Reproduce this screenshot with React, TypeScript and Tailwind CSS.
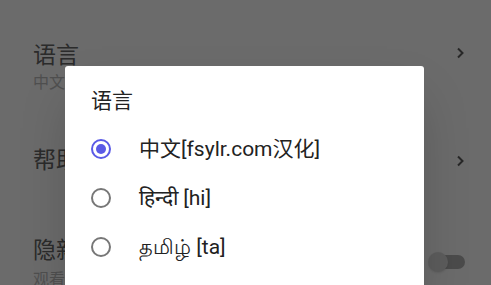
import { useState } from "react";

const cjk = "font-['Roboto','Noto_Sans_CJK_SC',sans-serif]";

const languages = [
  { code: "zh", label: "中文[fsylr.com汉化]" },
  { code: "hi", label: "हिन्दी [hi]" },
  { code: "ta", label: "தமிழ் [ta]" },
];

function Chevron() {
  return (
    <svg width="9" height="12" viewBox="0 0 9 12" className="shrink-0">
      <polyline points="2,1.5 6.5,6 2,10.5" fill="none" stroke="#5e5e5e" strokeWidth="2" />
    </svg>
  );
}

export default function App() {
  const [selected, setSelected] = useState("zh");

  return (
    <div className={`relative h-[285px] w-[491px] overflow-hidden bg-white ${cjk}`}>
      {/* Settings list underneath */}
      <div className="flex flex-col pl-[33px] pr-[26px]">
        <div className="flex items-start justify-between pt-[44px]">
          <div>
            <div className="text-[23px] leading-[24px] text-[#666]">语言</div>
            <div className="mt-[6px] text-[16px] leading-[18px] text-[#bdbdbd]">中文[fsylr.com汉化]</div>
          </div>
          <div className="pt-[3px]">
            <Chevron />
          </div>
        </div>
        <div className="flex items-center justify-between pt-[57px]">
          <div className="text-[23px] leading-[24px] text-[#666]">帮助</div>
          <Chevron />
        </div>
        <div className="flex items-start justify-between pt-[66px]">
          <div>
            <div className="text-[23px] leading-[24px] text-[#666]">隐新</div>
            <div className="mt-[8px] text-[16px] leading-[18px] text-[#bdbdbd]">观看</div>
          </div>
          <div className="relative mt-[13px] flex h-[20px] w-[37px] items-center justify-end">
            <div className="h-[14px] w-[30px] rounded-full bg-[#b4b4b4]" />
            <div className="absolute left-0 top-0 h-[20px] w-[20px] rounded-full bg-[#dcdcdc] shadow" />
          </div>
        </div>
      </div>

      {/* Scrim */}
      <div className="absolute inset-0 bg-black/[0.58]" />

      {/* Dialog */}
      <div className="absolute left-[65px] top-[66px] w-[359px] rounded-[3px] bg-white pb-6 pl-[26px] pt-[23px] shadow-2xl">
        <div className="text-[21px] leading-[24px] text-[#222]">语言</div>
        <div className="mt-[11px] flex flex-col">
          {languages.map((lang) => {
            const on = lang.code === selected;
            return (
              <button
                key={lang.code}
                onClick={() => setSelected(lang.code)}
                className="flex h-[49px] items-center text-left"
              >
                <span
                  className={`flex h-[20px] w-[20px] shrink-0 items-center justify-center rounded-full border-2 ${
                    on ? "border-[#5a5ae6]" : "border-[#777]"
                  }`}
                >
                  {on && <span className="h-[10px] w-[10px] rounded-full bg-[#5a5ae6]" />}
                </span>
                <span className="ml-[28px] text-[21px] leading-[24px] text-[#222]">{lang.label}</span>
              </button>
            );
          })}
        </div>
      </div>
    </div>
  );
}
